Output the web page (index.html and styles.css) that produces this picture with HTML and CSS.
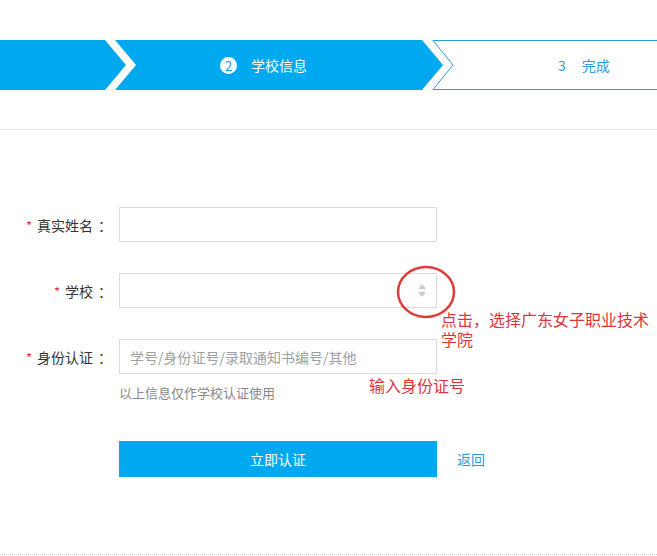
FILE: index.html
```html
<!DOCTYPE html>
<html>
<head>
    <title>学校认证</title>
    <link rel="stylesheet" href="styles.css">
</head>
<body>
    <div class="page">
        <!-- Steps -->
        <div class="steps">
            <svg class="steps-bg" width="657" height="50" viewBox="0 0 657 50">
                <polygon points="0,0 105,0 126,25 105,50 0,50" fill="#00a9ef"/>
                <polygon points="115,0 422,0 443,25 422,50 115,50 136,25" fill="#00a9ef"/>
                <polyline points="660,0.5 433,0.5 453,25 433,49.5 660,49.5" fill="none" stroke="#2a9bdc" stroke-width="1"/>
            </svg>
            <div class="step step-done"></div>
            <div class="step step-current">
                <span class="step-num">2</span>
                <span>学校信息</span>
            </div>
            <div class="step step-next">
                <span class="step-num-plain">3</span>
                <span>完成</span>
            </div>
        </div>

        <div class="divider"></div>

        <!-- Form -->
        <div class="form">
            <div class="row">
                <label class="label"><i class="star">*</i>真实姓名<span class="colon">：</span></label>
                <div class="input"></div>
            </div>
            <div class="row">
                <label class="label"><i class="star">*</i>学校<span class="colon">：</span></label>
                <div class="input select">
                    <svg class="arrows" width="8" height="14" viewBox="0 0 8 14">
                        <polygon points="4,0 8,5 0,5" fill="#c8ccd2"/>
                        <polygon points="0,8 8,8 4,13" fill="#c8ccd2"/>
                    </svg>
                </div>
            </div>
            <div class="row">
                <label class="label"><i class="star">*</i>身份认证<span class="colon">：</span></label>
                <div class="input"><span class="placeholder">学号/身份证号/录取通知书编号/其他</span></div>
            </div>
            <p class="hint">以上信息仅作学校认证使用</p>
            <div class="actions">
                <button class="submit">立即认证</button>
                <a class="back" href="#">返回</a>
            </div>
        </div>

        <div class="bottom-line"></div>

        <!-- Annotations -->
        <svg class="mark" width="62" height="56" viewBox="0 0 62 56">
            <ellipse cx="31" cy="27" rx="28" ry="25" fill="none" stroke="#e23a3a" stroke-width="2.5"/>
        </svg>
        <p class="note note-school">点击，选择广东女子职业技术<br>学院</p>
        <p class="note note-id">输入身份证号</p>
    </div>
</body>
</html>
```

FILE: styles.css
```css
:root {
    --blue: #00a9ef;
    --link: #2a9bdc;
    --red: #e0343c;
    --border: #dcdcdc;
}

* {
    margin: 0;
    padding: 0;
    box-sizing: border-box;
}

body {
    font-family: "Noto Sans CJK SC", "Noto Sans", sans-serif;
    font-size: 14px;
    color: #333;
    background: #fff;
}

.page {
    position: relative;
    width: 657px;
    height: 556px;
    overflow: hidden;
    padding-top: 40px;
}

/* Steps */
.steps {
    position: relative;
    height: 50px;
    display: flex;
}

.steps-bg {
    position: absolute;
    left: 0;
    top: 0;
}

.step {
    position: relative;
    display: flex;
    align-items: center;
    height: 50px;
}

.step-done {
    width: 115px;
}

.step-current {
    width: 318px;
    padding-left: 105px;
    color: #fff;
    gap: 14px;
}

.step-num {
    width: 17px;
    height: 17px;
    border-radius: 50%;
    background: #fff;
    color: var(--blue);
    font-size: 13px;
    line-height: 17px;
    text-align: center;
}

.step-next {
    flex: 1;
    padding-left: 125px;
    color: var(--link);
    gap: 16px;
}

.divider {
    margin-top: 39px;
    border-bottom: 1px solid #e6e6e6;
}

/* Form */
.form {
    padding-top: 77px;
}

.row {
    display: flex;
    align-items: center;
    margin-bottom: 31px;
}

.row:nth-child(3) {
    margin-bottom: 0;
}

.label {
    width: 119px;
    padding-right: 7px;
    text-align: right;
    color: #333;
}

.colon {
    margin-left: 5px;
}

.star {
    font-style: normal;
    color: var(--red);
    margin-right: 5px;
    font-size: 13px;
}

.input {
    width: 318px;
    height: 35px;
    border: 1px solid var(--border);
    display: flex;
    align-items: center;
    padding-left: 10px;
}

.select {
    justify-content: flex-end;
    padding-right: 10px;
}

.placeholder {
    color: #a0a0a0;
}

.hint {
    margin-top: 10px;
    margin-left: 119px;
    font-size: 13px;
    line-height: 18px;
    color: #888;
}

.actions {
    display: flex;
    align-items: center;
    margin-top: 39px;
    margin-left: 119px;
}

.submit {
    width: 318px;
    height: 36px;
    border: none;
    background: var(--blue);
    color: #fff;
    font-family: inherit;
    font-size: 14px;
    cursor: pointer;
}

.back {
    margin-left: 20px;
    color: var(--link);
    text-decoration: none;
}

.bottom-line {
    margin-top: 77px;
    border-bottom: 1px dotted #c8c8c8;
}

/* Annotations */
.mark {
    position: absolute;
    left: 395px;
    top: 265px;
}

.note {
    position: absolute;
    color: var(--red);
    font-size: 16px;
    line-height: 20px;
}

.note-school {
    left: 441px;
    top: 309px;
}

.note-id {
    left: 369px;
    top: 375px;
}
```
